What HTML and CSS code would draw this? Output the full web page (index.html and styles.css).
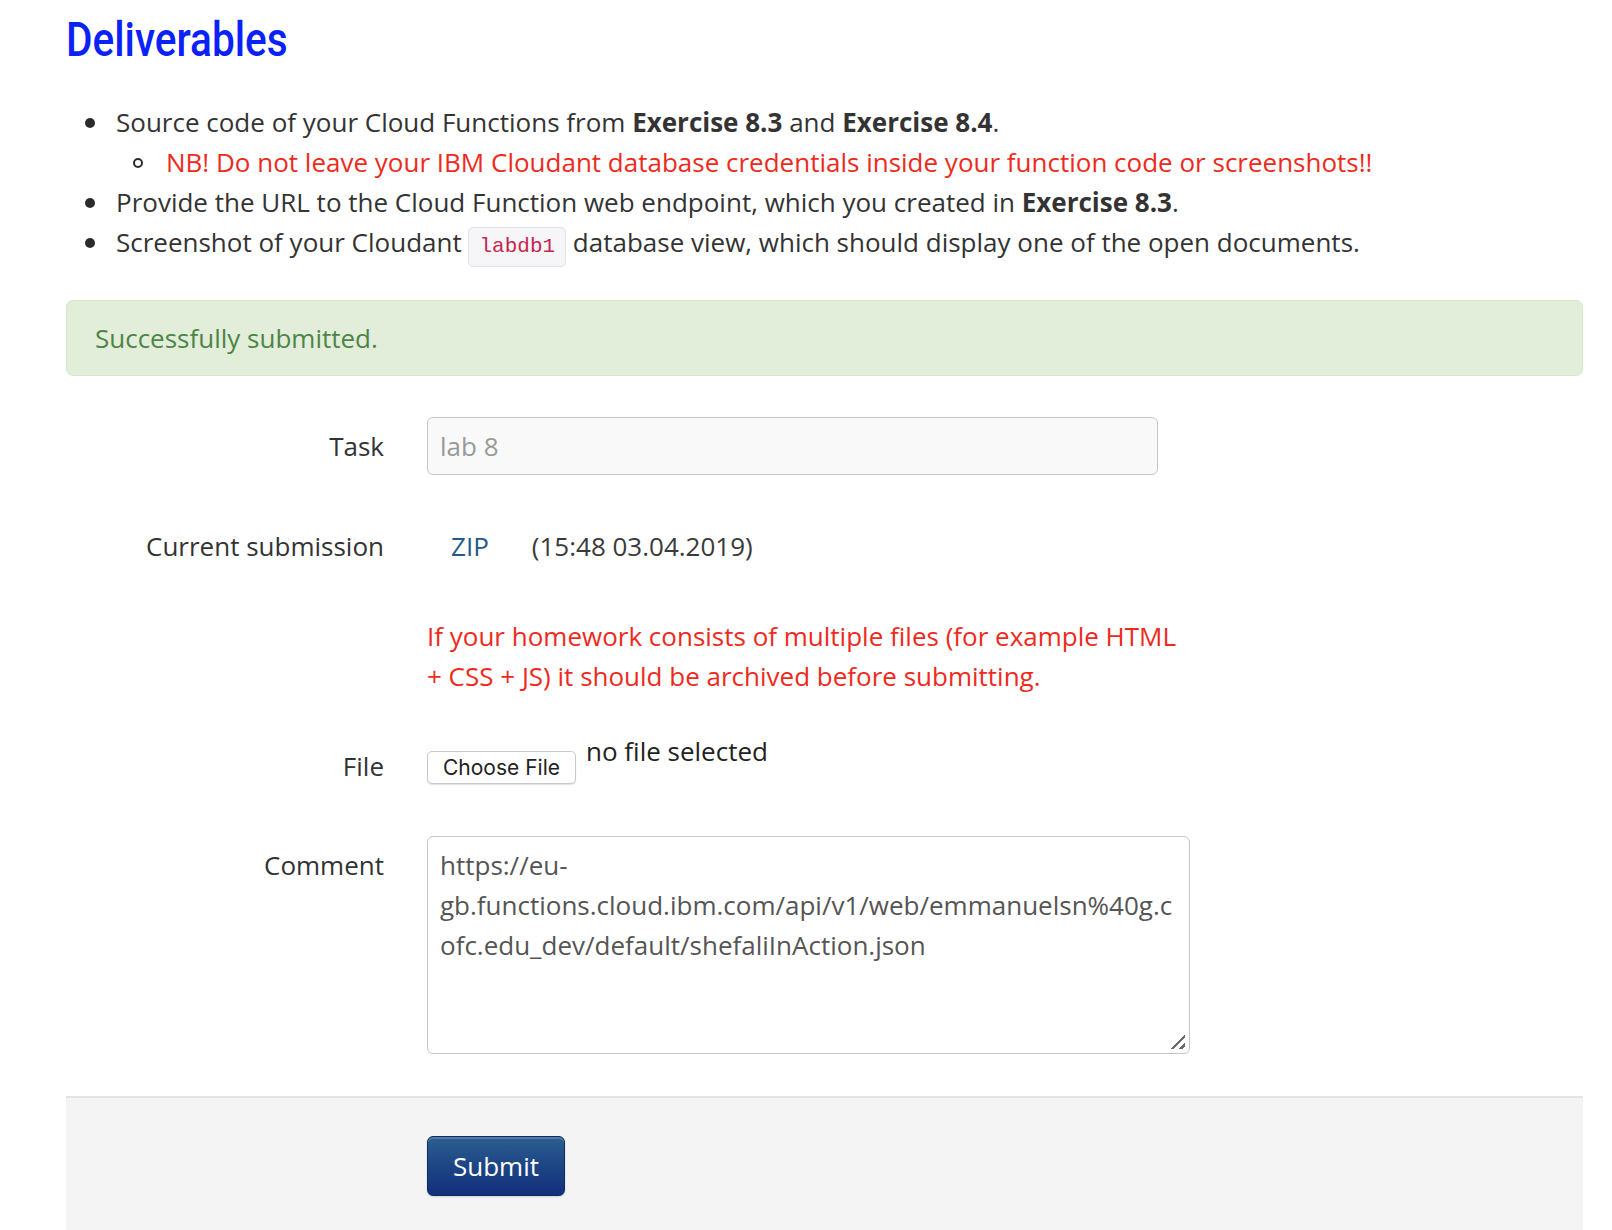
FILE: index.html
```html
<!DOCTYPE html>
<html lang="en">
<head>
<meta charset="utf-8">
<title>Deliverables</title>
<link rel="stylesheet" href="styles.css">
</head>
<body>
<div class="page">
  <h1 class="title"><span class="title-text">Deliverables</span></h1>
  <ul class="deliverables">
    <li>Source code of your Cloud Functions from <b>Exercise 8.3</b> and <b>Exercise 8.4</b>.
      <ul class="sub">
        <li class="warn">NB! Do not leave your IBM Cloudant database credentials inside your function code or screenshots!!</li>
      </ul>
    </li>
    <li>Provide the URL to the Cloud Function web endpoint, which you created in <b>Exercise 8.3</b>.</li>
    <li>Screenshot of your Cloudant <code class="code">labdb1</code> database view, which should display one of the open documents.</li>
  </ul>

  <div class="alert">Successfully submitted.</div>

  <form class="form">
    <div class="row row-task">
      <label class="label label-input">Task</label>
      <div class="control"><input class="input" type="text" value="lab 8" readonly></div>
    </div>
    <div class="row row-current">
      <div class="label">Current submission</div>
      <div class="control current"><a class="zip" href="#">ZIP</a><span class="date">(15:48 03.04.2019)</span></div>
    </div>
    <div class="row row-help">
      <div class="label"></div>
      <div class="control help">If your homework consists of multiple files (for example HTML + CSS + JS) it should be archived before submitting.</div>
    </div>
    <div class="row row-file">
      <label class="label label-file">File</label>
      <div class="control file"><span class="file-btn">Choose File</span><span class="file-name">no file selected</span></div>
    </div>
    <div class="row row-comment">
      <label class="label label-input">Comment</label>
      <div class="control textarea-wrap"><textarea class="textarea">https://eu-gb.functions.cloud.ibm.com/api/v1/web/emmanuelsn%40g.cofc.edu_dev/default/shefaliInAction.json</textarea><span class="grip"></span></div>
    </div>
    <div class="row footer">
      <div class="label"></div>
      <div class="control"><button class="submit" type="button">Submit</button></div>
    </div>
  </form>
</div>
</body>
</html>
```

FILE: styles.css
```css
html, body {
  margin: 0;
  padding: 0;
  background: #ffffff;
}

body {
  font-family: "Open Sans", "Liberation Sans", sans-serif;
  font-size: 26px;
  line-height: 40px;
  color: #333333;
}

.page {
  margin: 0 29px 0 66px;
}

.title {
  margin: 12px 0 0;
  height: 56px;
  line-height: 56px;
  font-family: Roboto, "Liberation Sans", sans-serif;
  font-weight: 500;
  font-size: 48px;
  color: #0a22f7;
}

.title-text {
  display: inline-block;
  transform: scaleX(0.845);
  transform-origin: left center;
}

.deliverables {
  margin: 34px 0 0;
  padding-left: 50px;
  list-style: none;
}

.deliverables > li,
.sub > li {
  position: relative;
}

.deliverables > li::before {
  content: "";
  position: absolute;
  left: -31px;
  top: 16px;
  width: 10px;
  height: 10px;
  border-radius: 50%;
  background: #2b2b2b;
}

.deliverables b {
  font-weight: 700;
}

.sub {
  margin: 0;
  padding-left: 50px;
  list-style: none;
}

.sub > li::before {
  content: "";
  position: absolute;
  left: -33px;
  top: 16px;
  box-sizing: border-box;
  width: 10px;
  height: 10px;
  border-radius: 50%;
  border: 2px solid #2b2b2b;
}

.warn {
  color: #ee2a1d;
}

.code {
  font-family: "Liberation Mono", "DejaVu Sans Mono", monospace;
  font-size: 21px;
  line-height: 1;
  color: #c7254e;
  background: #f6f6f8;
  border: 1px solid #e1e1e8;
  border-radius: 5px;
  padding: 7px 10px 8px;
}

.alert {
  margin-top: 38px;
  padding: 17px 28px;
  background: #e2eed9;
  border: 1px solid #d7e8c8;
  border-radius: 7px;
  color: #4d8548;
}

.form {
  margin-top: 41px;
}

.row {
  display: grid;
  grid-template-columns: 318px 763px;
  column-gap: 43px;
  align-items: start;
}

.label {
  text-align: right;
  font-weight: 400;
}

.label-input {
  padding-top: 9px;
}

.label-file {
  padding-top: 15px;
}

.input {
  box-sizing: border-box;
  width: 731px;
  height: 58px;
  padding: 8px 12px;
  font-family: "Open Sans", "Liberation Sans", sans-serif;
  font-size: 26px;
  line-height: 40px;
  color: #999999;
  background: #f9f9f9;
  border: 1px solid #c6c6c6;
  border-radius: 6px;
  outline: none;
}

.row-current {
  margin-top: 51px;
}

.current {
  display: flex;
}

.zip {
  margin-left: 24px;
  color: #245a8a;
  text-decoration: none;
}

.date {
  margin-left: 43px;
  color: #3a3a3a;
}

.row-help {
  margin-top: 50px;
}

.help {
  color: #ee2a1d;
}

.row-file {
  margin-top: 35px;
}

.file {
  display: flex;
  align-items: flex-start;
}

.file-btn {
  box-sizing: border-box;
  margin-top: 20px;
  width: 149px;
  height: 33px;
  display: flex;
  align-items: center;
  justify-content: center;
  font-family: Inter, "Liberation Sans", sans-serif;
  font-size: 21px;
  line-height: 30px;
  color: #222222;
  background: #ffffff;
  border: 1px solid #c9c9c9;
  border-radius: 5px;
  box-shadow: 0 1px 1px rgba(0, 0, 0, 0.12);
}

.file-name {
  margin-left: 10px;
  color: #222222;
}

.row-comment {
  margin-top: 50px;
}

.textarea-wrap {
  position: relative;
  width: 763px;
}

.textarea {
  box-sizing: border-box;
  display: block;
  width: 763px;
  height: 218px;
  padding: 8px 12px;
  font-family: "Open Sans", "Liberation Sans", sans-serif;
  font-size: 26px;
  line-height: 40px;
  color: #555555;
  background: #ffffff;
  border: 1px solid #c6c6c6;
  border-radius: 6px;
  outline: none;
  resize: none;
  overflow: hidden;
}

.grip {
  position: absolute;
  right: 5px;
  bottom: 5px;
  width: 14px;
  height: 14px;
  background:
    linear-gradient(135deg, transparent 0 48%, #6a6a6a 48% 58%, transparent 58% 100%) no-repeat,
    linear-gradient(135deg, transparent 0 78%, #6a6a6a 78% 90%, transparent 90% 100%) no-repeat;
  background-size: 14px 14px, 14px 14px;
  pointer-events: none;
}

.footer {
  margin-top: 42px;
  padding: 38px 0 38px;
  background: #f4f4f4;
  border-top: 2px solid #e4e4e4;
}

.submit {
  box-sizing: border-box;
  width: 138px;
  height: 60px;
  padding: 0;
  font-family: "Open Sans", "Liberation Sans", sans-serif;
  font-size: 26px;
  line-height: 40px;
  color: #ffffff;
  background: linear-gradient(to bottom, #2c5e8f 0%, #1d4585 50%, #132f7b 100%);
  border: 1px solid #112a6b;
  border-radius: 6px;
  box-shadow: inset 0 2px 0 rgba(255, 255, 255, 0.18), 0 1px 2px rgba(0, 0, 0, 0.15);
  cursor: pointer;
}
```
